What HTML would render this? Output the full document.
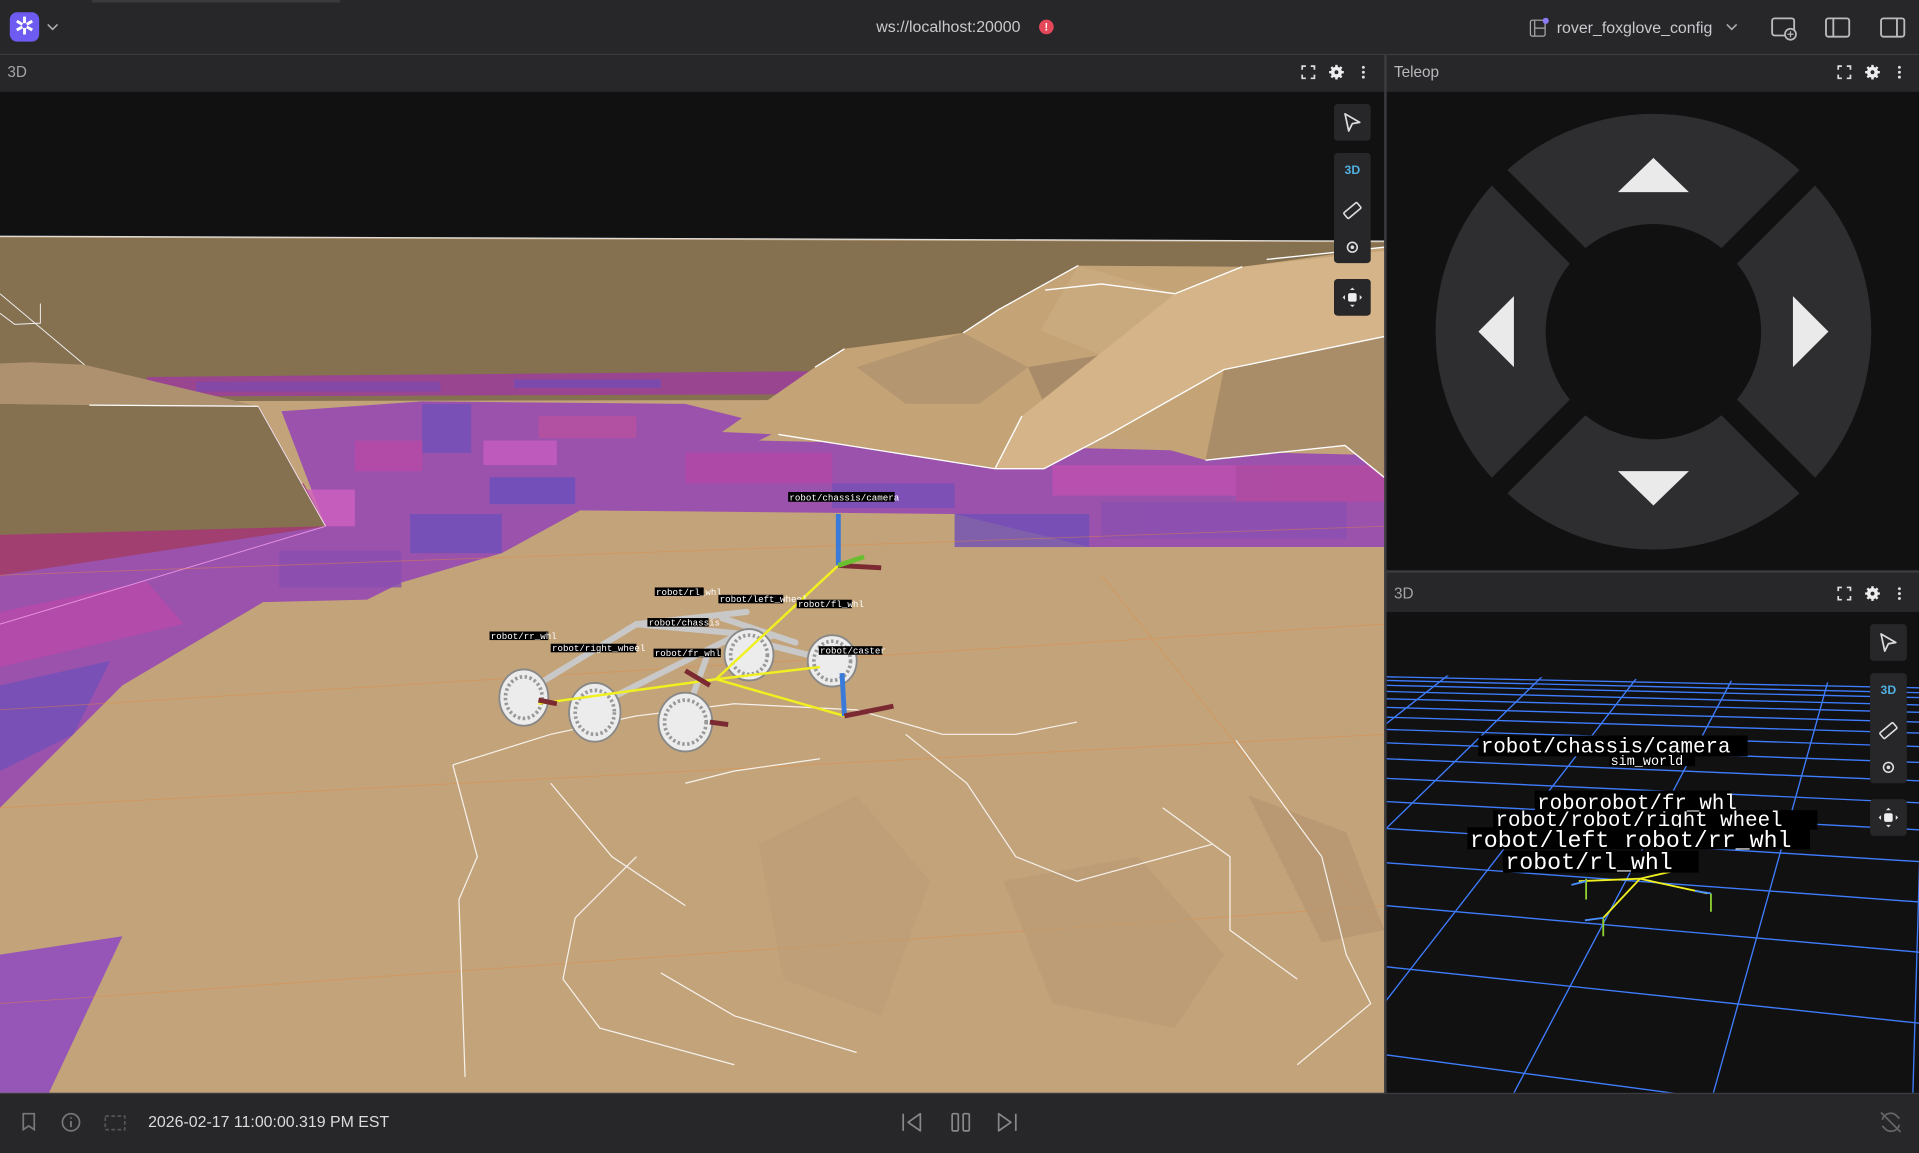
<!DOCTYPE html>
<html><head><meta charset="utf-8"><style>
html,body{margin:0;padding:0;background:#27272a;overflow:hidden;width:1919px;height:1152px}
#c{position:absolute;left:0;top:0;width:1568px;height:941px;transform:scale(1.22385);transform-origin:0 0;font-family:"Liberation Sans",sans-serif;background:#27272a}
.a{position:absolute}
.t{color:#a3a3a8;font-size:12.5px}
.mono{font-family:"Liberation Mono","DejaVu Sans Mono",monospace}
</style></head><body><div id="c">
<!-- top bar -->
<div class="a" style="left:0;top:0;width:1568px;height:44px;background:#27272a;border-bottom:1px solid #3b3b40"></div>
<div class="a" style="left:75px;top:0;width:203px;height:2px;background:#3a3a3f"></div>
<div class="a" style="left:8px;top:10px;width:24px;height:24px;border-radius:6px;background:#6e5cf2;color:#fff;font-size:20px;line-height:24px;text-align:center">✲</div>
<svg class="a" style="left:38px;top:18px" width="10" height="8"><path d="M1 2l4 4 4-4" stroke="#aaa" fill="none" stroke-width="1.3"/></svg>
<div class="a" style="left:716px;top:14px;font-size:13px;color:#c9c9cd">ws://localhost:20000</div>
<div class="a" style="left:849px;top:16px;width:12px;height:12px;border-radius:6px;background:#e5475a;color:#fff;font-size:9px;line-height:12px;text-align:center;font-weight:bold">!</div>
<svg class="a" style="left:1249px;top:14px" width="18" height="18"><rect x="1.5" y="2.5" width="12" height="13" rx="1.5" stroke="#aaa" fill="none"/><path d="M5 3v12M5 9h8" stroke="#aaa"/><circle cx="14" cy="3" r="2.5" fill="#8a7cf5"/></svg>
<div class="a" style="left:1272px;top:15px;font-size:13px;color:#c9c9cd">rover_foxglove_config</div>
<svg class="a" style="left:1410px;top:18px" width="10" height="8"><path d="M1 2l4 4 4-4" stroke="#aaa" fill="none" stroke-width="1.3"/></svg>
<svg class="a" style="left:1446px;top:12px" width="24" height="22"><rect x="2" y="3" width="18" height="14" rx="2" stroke="#bbb" fill="none" stroke-width="1.5"/><circle cx="17" cy="16" r="4.5" fill="#27272a" stroke="#bbb" stroke-width="1.4"/><path d="M17 13.5v5M14.5 16h5" stroke="#bbb"/></svg>
<svg class="a" style="left:1490px;top:12px" width="24" height="22"><rect x="2" y="3" width="19" height="15" rx="2" stroke="#bbb" fill="none" stroke-width="1.5"/><path d="M8 3v15" stroke="#bbb" stroke-width="1.5"/></svg>
<svg class="a" style="left:1535px;top:12px" width="24" height="22"><rect x="2" y="3" width="19" height="15" rx="2" stroke="#bbb" fill="none" stroke-width="1.5"/><path d="M15 3v15" stroke="#bbb" stroke-width="1.5"/></svg>

<!-- panel headers -->
<div class="a" style="left:0;top:45px;width:1131px;height:30px;background:#27272a"></div>
<div class="a t" style="left:6px;top:52px">3D</div>
<div class="a" style="left:1131px;top:45px;width:2px;height:848px;background:#3b3b40"></div>
<div class="a t" style="left:1139px;top:52px;color:#b8b8be">Teleop</div>
<div class="a" style="left:1133px;top:466px;width:435px;height:2px;background:#3b3b40"></div>
<div class="a t" style="left:1139px;top:478px">3D</div>

<svg class="a" style="left:1062px;top:52px" width="60" height="14"><path d="M2 5V2h3M9 2h3v3M12 9v3H9M5 12H2V9" stroke="#ddd" fill="none" stroke-width="1.4"/><path d="M30 1v12M24 7h12M25.8 2.8l8.4 8.4M34.2 2.8l-8.4 8.4" stroke="#eee" stroke-width="2"/><circle cx="30" cy="7" r="4.5" fill="#eee"/><circle cx="30" cy="7" r="1.6" fill="#27272a"/><circle cx="52" cy="3" r="1.2" fill="#ddd"/><circle cx="52" cy="7" r="1.2" fill="#ddd"/><circle cx="52" cy="11" r="1.2" fill="#ddd"/></svg>
<svg class="a" style="left:1500px;top:52px" width="60" height="14"><path d="M2 5V2h3M9 2h3v3M12 9v3H9M5 12H2V9" stroke="#ddd" fill="none" stroke-width="1.4"/><path d="M30 1v12M24 7h12M25.8 2.8l8.4 8.4M34.2 2.8l-8.4 8.4" stroke="#eee" stroke-width="2"/><circle cx="30" cy="7" r="4.5" fill="#eee"/><circle cx="30" cy="7" r="1.6" fill="#27272a"/><circle cx="52" cy="3" r="1.2" fill="#ddd"/><circle cx="52" cy="7" r="1.2" fill="#ddd"/><circle cx="52" cy="11" r="1.2" fill="#ddd"/></svg>
<svg class="a" style="left:1500px;top:478px" width="60" height="14"><path d="M2 5V2h3M9 2h3v3M12 9v3H9M5 12H2V9" stroke="#ddd" fill="none" stroke-width="1.4"/><path d="M30 1v12M24 7h12M25.8 2.8l8.4 8.4M34.2 2.8l-8.4 8.4" stroke="#eee" stroke-width="2"/><circle cx="30" cy="7" r="4.5" fill="#eee"/><circle cx="30" cy="7" r="1.6" fill="#27272a"/><circle cx="52" cy="3" r="1.2" fill="#ddd"/><circle cx="52" cy="7" r="1.2" fill="#ddd"/><circle cx="52" cy="11" r="1.2" fill="#ddd"/></svg>

<!-- left 3D viewport -->
<svg class="a" style="left:0;top:75px" width="1131" height="818" viewBox="0 75 1131 818">
<rect x="0" y="75" width="1131" height="818" fill="#111112"/>
<polygon points="0,193 1131,197 1131,893 0,893" fill="#c3a37a"/>
<polygon points="0,194 1131,198 1131,330 0,330" fill="#857050"/>
<polygon points="120,308 700,303 700,322 120,324" fill="#9a4590"/>
<rect x="160" y="312" width="200" height="8" fill="#7a4ab0" opacity="0.7"/>
<rect x="420" y="310" width="120" height="7" fill="#6f4db8" opacity="0.7"/>
<polygon points="0,328 1131,326 1131,893 0,893" fill="#c3a37a"/>
<polygon points="230,336 345,328 560,330 640,350 620,360 1131,372 1131,447 890,447 780,420 474,417 410,452 328,476 300,490 215,492 100,560 0,660 0,437 266,430" fill="#9a52ad"/>
<g opacity="0.8">
<rect x="345" y="330" width="40" height="40" fill="#7150b8"/>
<rect x="290" y="360" width="55" height="25" fill="#b84aa8"/>
<rect x="395" y="360" width="60" height="20" fill="#c85cc0"/>
<rect x="440" y="340" width="80" height="18" fill="#b850a0"/>
<rect x="400" y="390" width="70" height="22" fill="#6a50bc"/>
<rect x="230" y="400" width="60" height="30" fill="#d060c0"/>
<rect x="335" y="420" width="75" height="32" fill="#6e50ba"/>
<rect x="228" y="450" width="100" height="30" fill="#8a4fb0"/>
<rect x="560" y="370" width="120" height="25" fill="#b348a8"/>
<rect x="680" y="395" width="100" height="20" fill="#7550b8"/>
<rect x="780" y="420" width="110" height="27" fill="#7050b8"/>
<rect x="860" y="380" width="150" height="25" fill="#c050b0"/>
<rect x="1010" y="380" width="121" height="30" fill="#b44aa0"/>
<rect x="900" y="410" width="200" height="30" fill="#8a50b0"/>
</g>
<polygon points="0,437 248,395 266,430 0,470" fill="#a03f70"/>
<polygon points="0,500 120,475 150,510 0,545" fill="#b84aa8" opacity="0.8"/>
<polygon points="0,560 90,540 60,600 0,630" fill="#7050b8" opacity="0.8"/>
<polyline points="0,510 266,430" stroke="#e890e0" stroke-width="0.8" fill="none"/>
<polygon points="0,330 211,332 266,430 0,437" fill="#857050"/>
<polygon points="0,297 25,296 69,298 211,332 73,331 0,330" fill="#ae9270"/>
<polyline points="0,240 69,298" stroke="#eee" stroke-width="0.8" fill="none"/>
<polyline points="0,256 12,265 33,264 33,248" stroke="#eee" stroke-width="0.8" fill="none"/>
<polyline points="211,332 266,430" stroke="#f0e0f0" stroke-width="0.8" fill="none"/>
<polyline points="73,331 211,332" stroke="#fff" stroke-width="1" fill="none"/>
<polygon points="0,780 100,765 40,893 0,893" fill="#9656b8"/>
<polygon points="590,353 666,300 690,285 787,272 816,253 881,217 1015,218 1131,202 1131,390 1099,364 985,376 908,354 853,383 813,383 636,355" fill="#c4a377"/>
<polygon points="700,300 787,272 840,300 800,330 740,330" fill="#b49670"/>
<polygon points="840,300 900,290 890,330 860,345" fill="#a88c69"/>
<polygon points="881,217 960,240 900,290 850,270" fill="#c9a97e"/>
<polygon points="813,383 835,340 960,240 1015,218 1131,205 1131,275 1000,302 908,354 853,383" fill="#d4b488"/>
<polygon points="1000,302 1131,275 1131,390 1099,364 985,376" fill="#a98d68"/>
<g stroke="#fff" stroke-width="1.1" fill="none">
<polyline points="636,355 813,383"/>
<polyline points="666,300 690,285"/>
<polyline points="787,272 816,253 881,217"/>
<polyline points="854,237 900,232 960,240"/>
<polyline points="960,240 1015,218"/>
<polyline points="813,383 853,383 908,354 1000,302 1131,275"/>
<polyline points="813,383 835,340"/>
<polyline points="985,376 1099,364 1131,390"/>
<polyline points="1035,212 1131,202"/>
</g>
<polyline points="0,193 1131,197" stroke="#ddd" stroke-width="1" fill="none"/>
<g stroke="#e8883a" stroke-width="0.7" opacity="0.45"><line x1="0" y1="470" x2="1131" y2="430"/><line x1="0" y1="580" x2="1131" y2="510"/><line x1="0" y1="660" x2="1131" y2="600"/><line x1="0" y1="820" x2="1131" y2="740"/><line x1="900" y1="470" x2="1131" y2="760"/></g>
<polygon points="620,690 700,650 760,720 720,830 640,800" fill="#bb9c75" opacity="0.6"/>
<polygon points="820,720 930,700 1000,780 960,840 860,820" fill="#b99a73" opacity="0.6"/>
<polygon points="1020,650 1100,680 1131,760 1080,770" fill="#b09370" opacity="0.6"/>
<g stroke="#fff" fill="none" stroke-width="1" opacity="0.85">
<polyline points="370,625 450,600 520,585 600,575 700,580 770,600 830,600 880,590"/>
<polyline points="370,625 390,700 375,735 380,880"/>
<polyline points="560,640 600,630 670,620"/>
<polyline points="740,600 790,640 830,700 880,720 990,690"/>
<polyline points="950,660 1005,700 1005,760 1060,800"/>
<polyline points="520,700 470,750 460,800 490,840 600,870"/>
<polyline points="540,795 600,830 700,860"/>
<polyline points="1010,605 1080,700 1100,780 1120,820 1060,870"/>
<polyline points="450,640 500,700 560,740"/>
</g>
<g stroke="#c8c8c8" stroke-width="5" stroke-linecap="round"><line x1="430" y1="565" x2="520" y2="510"/><line x1="520" y1="510" x2="630" y2="520"/><line x1="480" y1="580" x2="600" y2="520"/><line x1="560" y1="585" x2="580" y2="530"/><line x1="600" y1="520" x2="680" y2="540"/><line x1="520" y1="510" x2="610" y2="500"/><line x1="590" y1="505" x2="650" y2="525"/></g>
<g fill="#ececec" stroke="#888" stroke-width="1.5"><ellipse cx="428" cy="570" rx="20" ry="23"/><ellipse cx="486" cy="582" rx="21" ry="24"/><ellipse cx="560" cy="590" rx="22" ry="24"/><ellipse cx="612" cy="535" rx="20" ry="21"/><ellipse cx="680" cy="540" rx="20" ry="21"/></g>
<g fill="none" stroke="#999" stroke-width="3" stroke-dasharray="2 2"><ellipse cx="428" cy="570" rx="15" ry="17"/><ellipse cx="486" cy="582" rx="16" ry="18"/><ellipse cx="560" cy="590" rx="17" ry="18"/><ellipse cx="612" cy="535" rx="15" ry="16"/><ellipse cx="680" cy="540" rx="15" ry="16"/></g>
<g stroke="#f0f020" stroke-width="2"><line x1="685" y1="462" x2="585" y2="555"/><line x1="585" y1="555" x2="690" y2="585"/><line x1="585" y1="555" x2="440" y2="575"/><line x1="585" y1="555" x2="670" y2="545"/></g>
<g stroke-width="4"><line x1="685" y1="462" x2="685" y2="420" stroke="#3a7ad8"/><line x1="685" y1="462" x2="720" y2="464" stroke="#7a2a30"/><line x1="685" y1="462" x2="706" y2="455" stroke="#6abf30"/><line x1="690" y1="585" x2="688" y2="550" stroke="#3a7ad8"/><line x1="690" y1="585" x2="730" y2="577" stroke="#7a2a30"/><line x1="560" y1="548" x2="580" y2="560" stroke="#7a2a30"/><line x1="580" y1="590" x2="595" y2="592" stroke="#7a2a30"/><line x1="440" y1="572" x2="455" y2="575" stroke="#7a2a30"/></g>
<g class="mono" font-size="7.5" fill="#fff"><rect x="644" y="402" width="87" height="8" fill="#000"/><text x="645" y="409">robot/chassis/camera</text>
<rect x="535" y="480" width="40" height="7" fill="#000"/><text x="536" y="486">robot/rl_whl</text>
<rect x="587" y="486" width="53" height="7" fill="#000"/><text x="588" y="492">robot/left_wheel</text>
<rect x="651" y="490" width="45" height="7" fill="#000"/><text x="652" y="496">robot/fl_whl</text>
<rect x="529" y="505" width="50" height="7" fill="#000"/><text x="530" y="511">robot/chassis</text>
<rect x="400" y="516" width="48" height="7" fill="#000"/><text x="401" y="522">robot/rr_whl</text>
<rect x="450" y="526" width="70" height="7" fill="#000"/><text x="451" y="532">robot/right_wheel</text>
<rect x="534" y="530" width="55" height="7" fill="#000"/><text x="535" y="536">robot/fr_whl</text>
<rect x="669" y="528" width="52" height="7" fill="#000"/><text x="670" y="534">robot/caster</text></g>
</svg>

<!-- toolbar left -->
<div class="a" style="left:1090px;top:85px;width:30px;height:30px;background:#27272a;border-radius:3px"></div>
<svg class="a" style="left:1097px;top:92px" width="16" height="16"><path d="M2 1l12 7-6 1-3 6z" stroke="#ddd" fill="none" stroke-width="1.4" stroke-linejoin="round"/></svg>
<div class="a" style="left:1090px;top:125px;width:30px;height:90px;background:#27272a;border-radius:3px"></div>
<div class="a" style="left:1090px;top:134px;width:30px;text-align:center;font-size:10px;font-weight:bold;color:#4fb0e0">3D</div>
<svg class="a" style="left:1097px;top:164px" width="16" height="16"><rect x="1" y="5" width="14" height="6" rx="1" transform="rotate(-40 8 8)" stroke="#ddd" fill="none" stroke-width="1.3"/></svg>
<svg class="a" style="left:1099px;top:196px" width="12" height="12"><circle cx="6" cy="6" r="4" stroke="#ddd" fill="none" stroke-width="1.3"/><circle cx="6" cy="6" r="1.5" fill="#ddd"/></svg>
<div class="a" style="left:1090px;top:228px;width:30px;height:30px;background:#27272a;border-radius:3px"></div>
<svg class="a" style="left:1096px;top:234px" width="18" height="18"><rect x="5.5" y="5.5" width="7" height="7" rx="1.5" fill="#eee"/><path d="M9 1l-2 2h4zM9 17l-2-2h4zM1 9l2-2v4zM17 9l-2-2v4z" fill="#ddd"/></svg>

<!-- teleop -->
<svg class="a" style="left:1133px;top:75px" width="435" height="391" viewBox="1133 75 435 391">
<rect x="1133" y="75" width="435" height="391" fill="#111112"/>
<circle cx="1351" cy="271" r="133" fill="none" stroke="#2e2e31" stroke-width="90"/>
<line x1="1200" y1="120" x2="1502" y2="422" stroke="#111112" stroke-width="18"/>
<line x1="1502" y1="120" x2="1200" y2="422" stroke="#111112" stroke-width="18"/>
<polygon points="1351,129 1380,157 1322,157" fill="#eaeaea"/>
<polygon points="1351,413 1380,385 1322,385" fill="#eaeaea"/>
<polygon points="1208,271 1237,242 1237,300" fill="#eaeaea"/>
<polygon points="1494,271 1465,242 1465,300" fill="#eaeaea"/>
</svg>

<!-- right 3D viewport -->
<svg class="a" style="left:1133px;top:500px" width="435" height="393" viewBox="1133 500 435 393">
<rect x="1133" y="500" width="435" height="393" fill="#111112"/>
<defs><clipPath id="g"><polygon points="1133,551 1568,559 1568,893 1133,893"/></clipPath></defs>
<g clip-path="url(#g)" stroke="#3f7dff" stroke-width="1.1" fill="none">
<line x1="1133" y1="553" x2="1568" y2="562"/><line x1="1133" y1="556" x2="1568" y2="566"/><line x1="1133" y1="560" x2="1568" y2="570"/><line x1="1133" y1="565" x2="1568" y2="576"/><line x1="1133" y1="571" x2="1568" y2="582"/><line x1="1133" y1="578" x2="1568" y2="590"/><line x1="1133" y1="586" x2="1568" y2="599"/><line x1="1133" y1="596" x2="1568" y2="610"/><line x1="1133" y1="607" x2="1568" y2="623"/><line x1="1133" y1="620" x2="1568" y2="638"/><line x1="1133" y1="636" x2="1568" y2="656"/><line x1="1133" y1="655" x2="1568" y2="678"/><line x1="1133" y1="677" x2="1568" y2="704"/><line x1="1133" y1="705" x2="1568" y2="737"/><line x1="1133" y1="740" x2="1568" y2="778"/><line x1="1133" y1="790" x2="1568" y2="836"/><line x1="1133" y1="862" x2="1568" y2="920"/>
<line x1="1582" y1="239" x2="1563" y2="893"/><line x1="1582" y1="239" x2="1400" y2="893"/><line x1="1582" y1="239" x2="1237" y2="893"/><line x1="1582" y1="239" x2="1074" y2="893"/><line x1="1582" y1="239" x2="911" y2="893"/><line x1="1582" y1="239" x2="748" y2="893"/><line x1="1582" y1="239" x2="585" y2="893"/><line x1="1582" y1="239" x2="422" y2="893"/><line x1="1582" y1="239" x2="259" y2="893"/><line x1="1582" y1="239" x2="96" y2="893"/><line x1="1582" y1="239" x2="-67" y2="893"/><line x1="1582" y1="239" x2="-230" y2="893"/><line x1="1582" y1="239" x2="-393" y2="893"/><line x1="1582" y1="239" x2="-556" y2="893"/><line x1="1582" y1="239" x2="-719" y2="893"/><line x1="1582" y1="239" x2="-900" y2="893"/><line x1="1582" y1="239" x2="-1100" y2="893"/>
</g>
<g stroke-width="1.5"><line x1="1340" y1="718" x2="1290" y2="720" stroke="#f0f020"/><line x1="1340" y1="718" x2="1395" y2="730" stroke="#f0f020"/><line x1="1340" y1="718" x2="1310" y2="750" stroke="#f0f020"/><line x1="1340" y1="718" x2="1375" y2="710" stroke="#f0f020"/><line x1="1296" y1="718" x2="1296" y2="735" stroke="#8fd030"/><line x1="1310" y1="750" x2="1310" y2="765" stroke="#8fd030"/><line x1="1398" y1="730" x2="1398" y2="745" stroke="#8fd030"/><line x1="1310" y1="750" x2="1295" y2="752" stroke="#4a90ff"/><line x1="1296" y1="720" x2="1284" y2="723" stroke="#4a90ff"/><line x1="1385" y1="728" x2="1398" y2="730" stroke="#4a90ff"/></g>
<g class="mono" fill="#fff">
<rect x="1208" y="601" width="220" height="17" fill="#000"/><text x="1210" y="615" font-size="17">robot/chassis/camera</text>
<rect x="1315" y="616" width="70" height="10" fill="#000"/><text x="1316" y="625" font-size="11">sim_world</text>
<rect x="1220" y="662" width="265" height="16" fill="#000"/><text x="1222" y="675" font-size="17">robot/robot/right_wheel</text>
<rect x="1254" y="646" width="160" height="17" fill="#000"/><text x="1256" y="661" font-size="17">roborobot/fr_whl</text>
<rect x="1199" y="676" width="280" height="18" fill="#000"/><text x="1201" y="692" font-size="19">robot/left</text><text x="1327" y="692" font-size="19">robot/rr_whl</text>
<rect x="1228" y="695" width="160" height="18" fill="#000"/><text x="1230" y="710" font-size="19">robot/rl_whl</text>
</g>
</svg>
<!-- toolbar right -->
<div class="a" style="left:1528px;top:510px;width:30px;height:30px;background:#27272a;border-radius:3px"></div>
<svg class="a" style="left:1535px;top:517px" width="16" height="16"><path d="M2 1l12 7-6 1-3 6z" stroke="#ddd" fill="none" stroke-width="1.4" stroke-linejoin="round"/></svg>
<div class="a" style="left:1528px;top:550px;width:30px;height:90px;background:#27272a;border-radius:3px"></div>
<div class="a" style="left:1528px;top:559px;width:30px;text-align:center;font-size:10px;font-weight:bold;color:#4fb0e0">3D</div>
<svg class="a" style="left:1535px;top:589px" width="16" height="16"><rect x="1" y="5" width="14" height="6" rx="1" transform="rotate(-40 8 8)" stroke="#ddd" fill="none" stroke-width="1.3"/></svg>
<svg class="a" style="left:1537px;top:621px" width="12" height="12"><circle cx="6" cy="6" r="4" stroke="#ddd" fill="none" stroke-width="1.3"/><circle cx="6" cy="6" r="1.5" fill="#ddd"/></svg>
<div class="a" style="left:1528px;top:653px;width:30px;height:30px;background:#27272a;border-radius:3px"></div>
<svg class="a" style="left:1534px;top:659px" width="18" height="18"><rect x="5.5" y="5.5" width="7" height="7" rx="1.5" fill="#eee"/><path d="M9 1l-2 2h4zM9 17l-2-2h4zM1 9l2-2v4zM17 9l-2-2v4z" fill="#ddd"/></svg>

<!-- bottom bar -->
<div class="a" style="left:0;top:893px;width:1568px;height:48px;background:#27272a;border-top:1px solid #3b3b40"></div>
<svg class="a" style="left:15px;top:908px" width="95" height="18"><path d="M4 2h9v13l-4.5-3-4.5 3z" stroke="#777" fill="none" stroke-width="1.4"/><circle cx="43" cy="9" r="7" stroke="#777" fill="none" stroke-width="1.4"/><path d="M43 8v5M43 5v1" stroke="#777" stroke-width="1.5"/><path d="M71 4h16v11H71z" stroke="#555" fill="none" stroke-width="1.4" stroke-dasharray="3 2"/></svg>
<div class="a" style="left:121px;top:909px;font-size:13px;color:#dcdcdf">2026-02-17 11:00:00.319 PM EST</div>
<svg class="a" style="left:735px;top:907px" width="100" height="20"><path d="M3 3v14M17 3L7 10l10 7z" stroke="#888" fill="none" stroke-width="1.4" stroke-linejoin="round"/><rect x="43" y="3" width="5" height="14" rx="1" stroke="#888" fill="none" stroke-width="1.4"/><rect x="52" y="3" width="5" height="14" rx="1" stroke="#888" fill="none" stroke-width="1.4"/><path d="M95 3v14M81 3l10 7-10 7z" stroke="#888" fill="none" stroke-width="1.4" stroke-linejoin="round"/></svg>
<svg class="a" style="left:1535px;top:907px" width="20" height="20"><path d="M3 8a7 7 0 0 1 12-3l2 2M17 12a7 7 0 0 1-12 3l-2-2M2 2l16 16" stroke="#666" fill="none" stroke-width="1.4"/></svg>
</div></body></html>
